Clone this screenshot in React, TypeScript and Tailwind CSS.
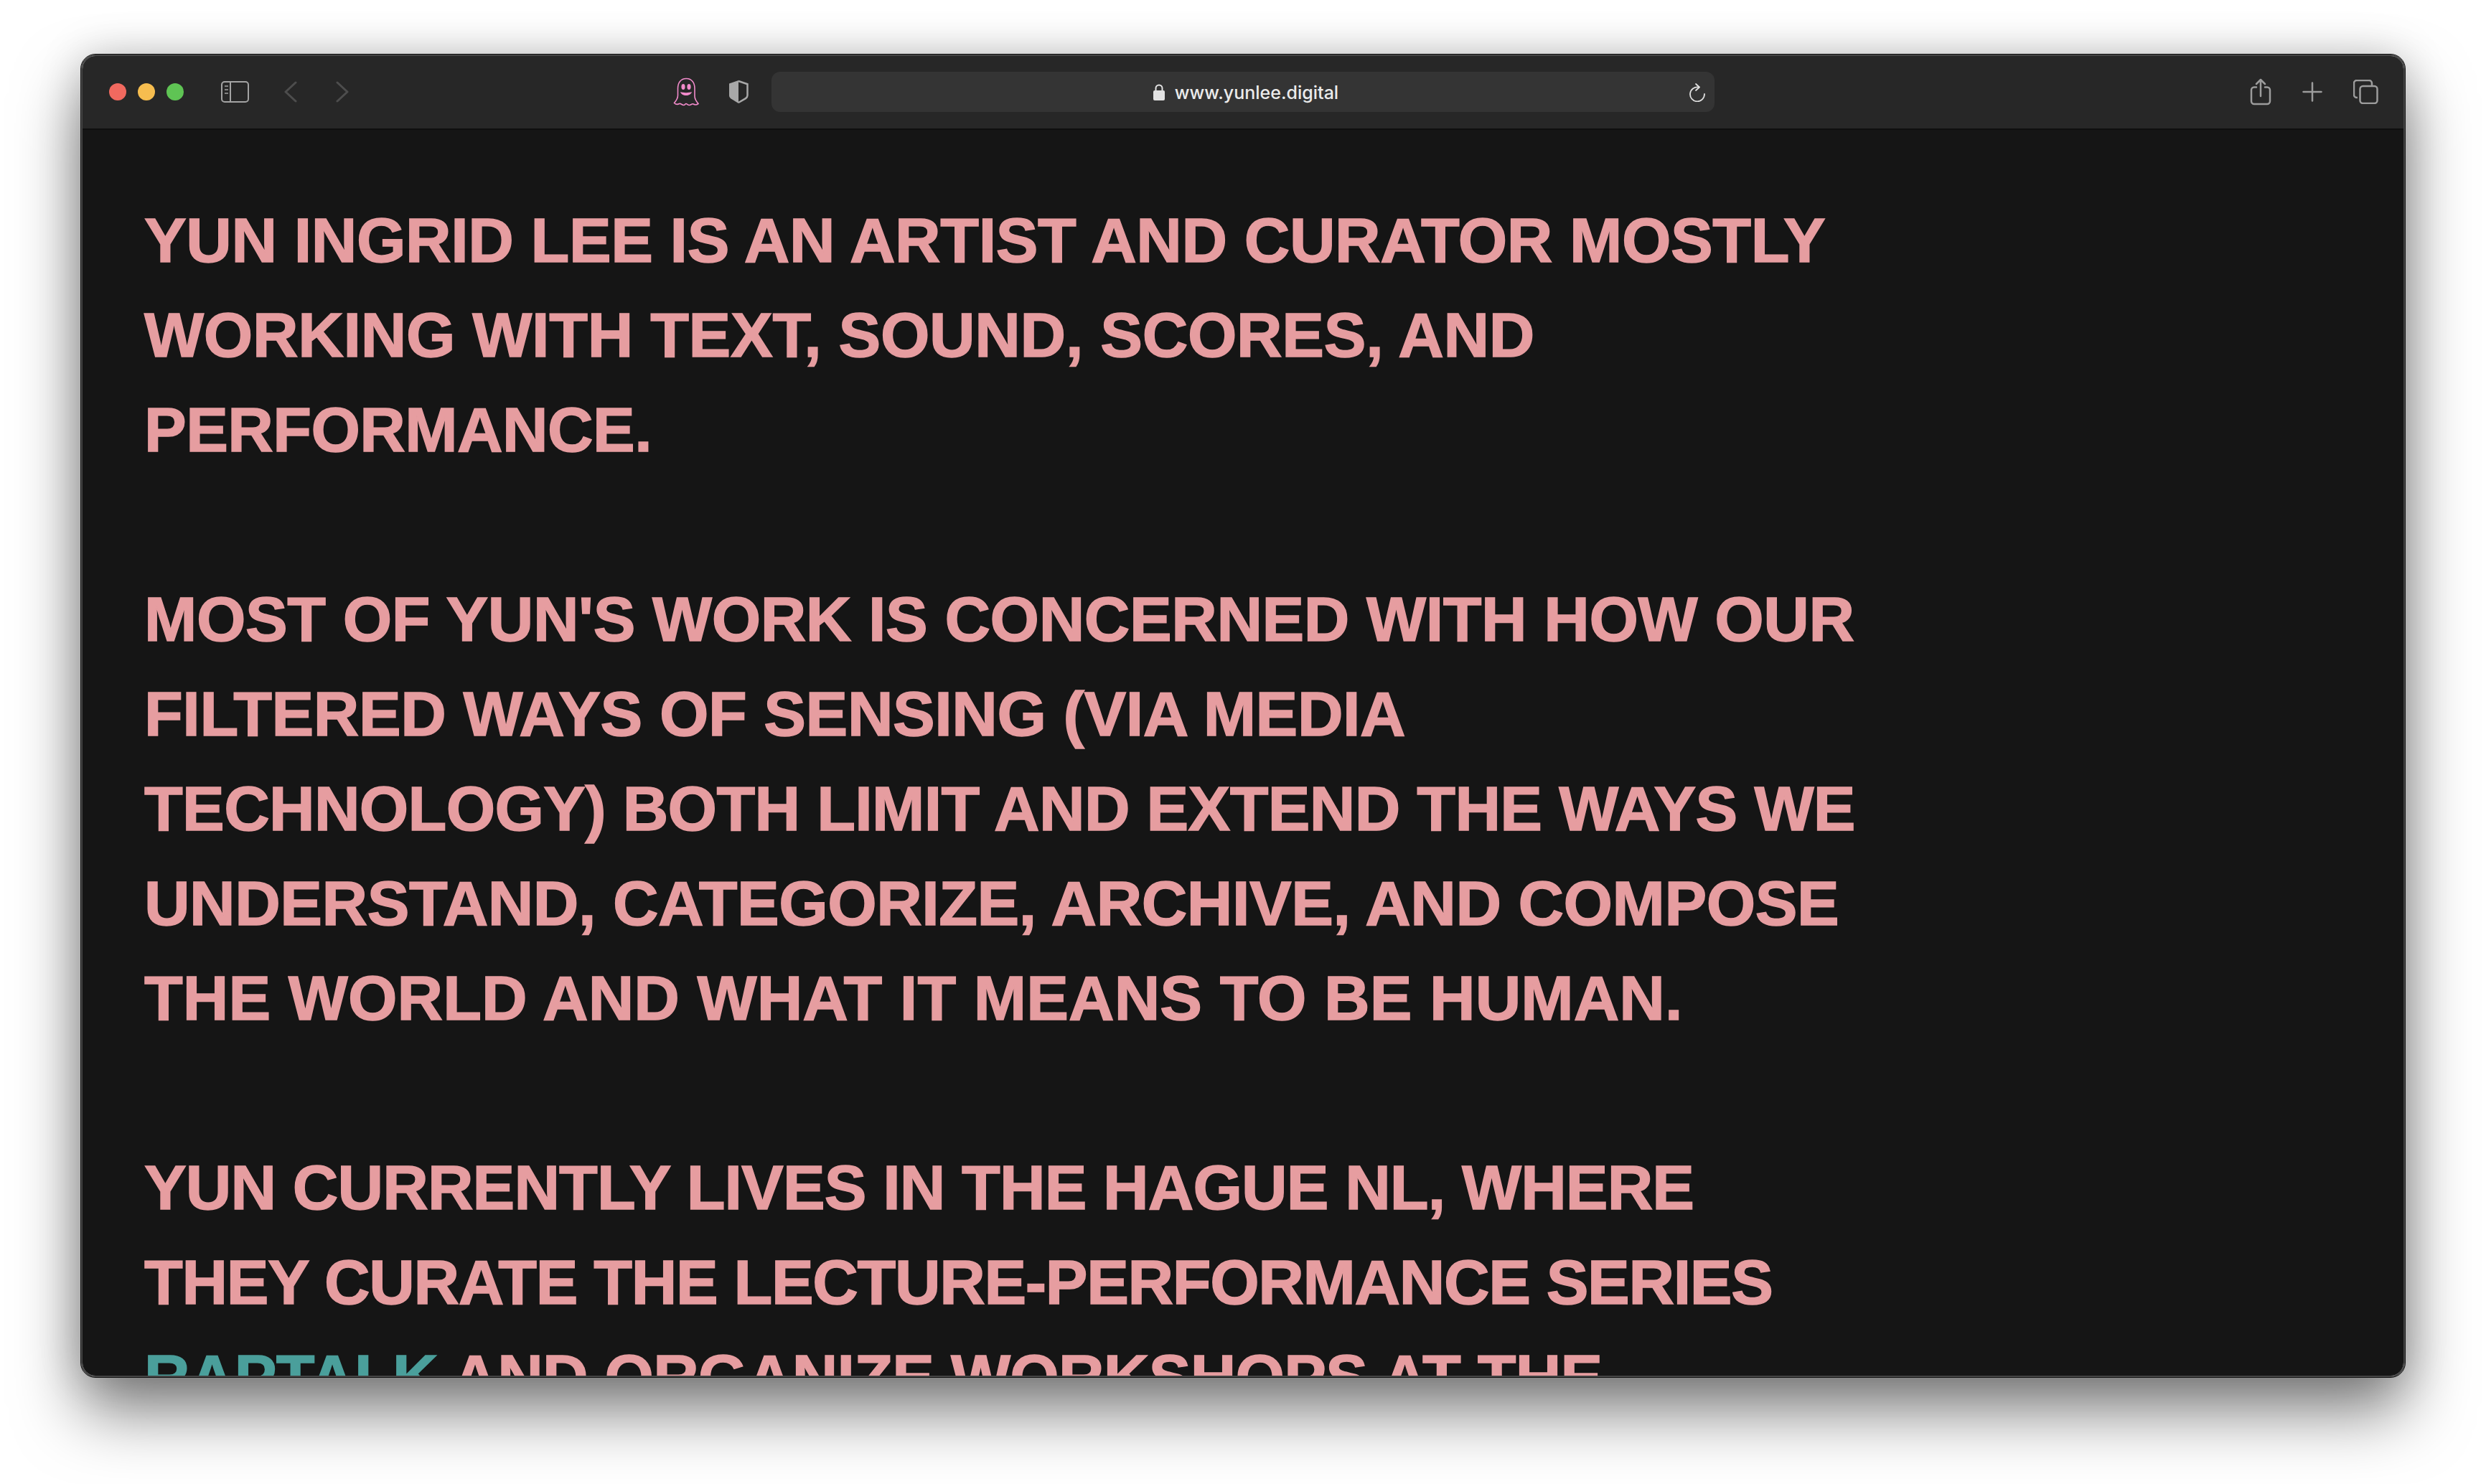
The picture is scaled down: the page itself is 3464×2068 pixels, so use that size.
const paragraphs = [
  [
    { text: 'YUN INGRID LEE IS AN ARTIST AND CURATOR MOSTLY', fit: 'tracking-[-0.38px]' },
    { text: 'WORKING WITH TEXT, SOUND, SCORES, AND', fit: 'tracking-[-0.28px]' },
    { text: 'PERFORMANCE.', fit: 'tracking-[-0.56px]' },
  ],
  [
    { text: "MOST OF YUN'S WORK IS CONCERNED WITH HOW OUR", fit: 'tracking-[-0.4px]' },
    { text: 'FILTERED WAYS OF SENSING (VIA MEDIA', fit: 'tracking-[-0.41px]' },
    { text: 'TECHNOLOGY) BOTH LIMIT AND EXTEND THE WAYS WE', fit: 'tracking-[-0.66px]' },
    { text: 'UNDERSTAND, CATEGORIZE, ARCHIVE, AND COMPOSE', fit: 'tracking-[-0.45px]' },
    { text: 'THE WORLD AND WHAT IT MEANS TO BE HUMAN.', fit: 'tracking-[0.1px]' },
  ],
  [
    { text: 'YUN CURRENTLY LIVES IN THE HAGUE NL, WHERE', fit: 'tracking-[-0.86px]' },
    { text: 'THEY CURATE THE LECTURE-PERFORMANCE SERIES', fit: 'tracking-[-1.32px]' },
  ],
]

function SidebarIcon() {
  return (
    <svg width="39" height="30" viewBox="0 0 39 30" fill="none" stroke="#a3a3a3">
      <rect x="1" y="1" width="37" height="28" rx="4" strokeWidth="2" />
      <path d="M13 1v28" strokeWidth="2" />
      <path d="M5 7h5M5 12h5M5 17h5" strokeWidth="1.6" />
    </svg>
  )
}

function Chevron({ right }: { right?: boolean }) {
  return (
    <svg width="18" height="30" viewBox="0 0 18 30" fill="none" stroke="#4d4d4d" strokeWidth="3" strokeLinecap="round" strokeLinejoin="round">
      <path d={right ? 'M2 2l14 13L2 28' : 'M16 2L2 15l14 13'} />
    </svg>
  )
}

function Ghost() {
  return (
    <svg width="36" height="40" viewBox="0 0 36 40" fill="none">
      <path
        d="M18 1.500C10.500 1.500 6.500 7.500 6.500 15v10c0 4-2 7-5 10.500 2 2 4.500 2.500 7 1 2-1 3.500 2 6 2s2-2 3.500-2 2 2 4.500 2 3.500-2.500 5.500-1.500c2.500 1.500 5 1 7-.5-3-3.500-5-6.500-5-10.500V15c0-7.500-4-13.500-11.500-13.500z"
        stroke="#f28bcb"
        strokeWidth="1.600"
      />
      <ellipse cx="14" cy="13" rx="2.600" ry="4" fill="#f28bcb" />
      <ellipse cx="22" cy="13" rx="2.600" ry="4" fill="#f28bcb" />
      <path d="M10 20c3 1.500 13 1.500 16 0-1 3.500-4 5-8 5s-7-1.500-8-5z" fill="#f28bcb" />
    </svg>
  )
}

function Shield() {
  return (
    <svg width="28" height="34" viewBox="0 0 28 34" fill="none">
      <path d="M14 1L1 5.500V22c0 2 1 3 2.500 4.500L14 33V1z" fill="#a8a8a8" />
      <path d="M14 2l12.500 4.200V22c0 2-1 3-2.500 4.200L14 32" stroke="#a8a8a8" strokeWidth="2.500" />
    </svg>
  )
}

function LockIcon() {
  return (
    <svg width="16" height="23" viewBox="0 0 16 23" fill="none">
      <path d="M3.500 10V6a4.500 4.500 0 0 1 9 0v4" stroke="#e3e3e3" strokeWidth="2" />
      <rect y="9" width="16" height="14" rx="2" fill="#e3e3e3" />
    </svg>
  )
}

function Reload() {
  return (
    <svg width="24" height="26" viewBox="0 0 24 26" fill="none" stroke="#e0e0e0" strokeWidth="1.800" strokeLinecap="round" strokeLinejoin="round">
      <path d="M14 5.500A10 10 0 1 0 22 15" />
      <path d="M10 1l5 4.500-5 4.500" />
    </svg>
  )
}

function Share() {
  return (
    <svg width="30" height="38" viewBox="0 0 30 38" fill="none" stroke="#9c9c9c" strokeWidth="2.500" strokeLinecap="round" strokeLinejoin="round">
      <path d="M9 12.500H6a4 4 0 0 0-4 4V32a4 4 0 0 0 4 4h18a4 4 0 0 0 4-4V16.500a4 4 0 0 0-4-4h-3" />
      <path d="M15 25V2M9 8l6-6 6 6" />
    </svg>
  )
}

function PlusIcon() {
  return (
    <svg width="28" height="28" viewBox="0 0 28 28" fill="none" stroke="#9c9c9c" strokeWidth="2.500" strokeLinecap="round">
      <path d="M14 1.500v25M1.500 14h25" />
    </svg>
  )
}

function Tabs() {
  return (
    <svg width="35" height="34" viewBox="0 0 35 34" fill="none" stroke="#9c9c9c" strokeWidth="2.500">
      <path d="M6 25H5a4 4 0 0 1-4-4V5a4 4 0 0 1 4-4h17a4 4 0 0 1 4 4v3" />
      <rect x="9.500" y="9" width="24" height="24" rx="4" />
    </svg>
  )
}

export default function App() {
  return (
    <div className="h-[2068px] w-[3464px] bg-white pt-[76px] pl-[113px] overflow-hidden">
      <div className="w-[3238px] h-[1843px] flex flex-col rounded-[20px] overflow-hidden border-2 border-[#454545] outline outline-[#111111] shadow-[0_48px_90px_rgba(0,0,0,0.5),0_0_60px_rgba(0,0,0,0.18)]">
        <header className="h-[103px] shrink-0 flex items-center pb-px bg-[#272727] border-b-2 border-[#0f0f0f]">
          <div className="flex items-center gap-4 ml-[37px]">
            <span className="w-6 h-6 rounded-full bg-[#f1695f]" />
            <span className="w-6 h-6 rounded-full bg-[#f6bd4f]" />
            <span className="w-6 h-6 rounded-full bg-[#5fc454]" />
          </div>
          <div className="ml-[52px]"><SidebarIcon /></div>
          <div className="ml-[49px]"><Chevron /></div>
          <div className="ml-[54px]"><Chevron right /></div>
          <div className="ml-[452px]"><Ghost /></div>
          <div className="ml-[41px]"><Shield /></div>
          <div className="ml-[32px] w-[1314px] h-14 rounded-xl bg-[#343434] relative flex items-center justify-center pl-[8px]">
            <LockIcon />
            <span className="ml-[14px] mt-[3px] text-[25px] font-medium text-[#ebebeb] font-['Inter',sans-serif]">www.yunlee.digital</span>
            <div className="absolute right-[12px] top-[16px]"><Reload /></div>
          </div>
          <div className="ml-auto flex items-center gap-[43px] mr-[35px]">
            <Share />
            <PlusIcon />
            <Tabs />
          </div>
        </header>
        <main className="flex-1 bg-[#151515] overflow-hidden pl-[86px] pt-[88px] text-[88px] leading-[132px] font-bold text-[#e69da0] [-webkit-text-stroke:1.500px_#e69da0] font-['Liberation_Sans',sans-serif]">
          {paragraphs.map((lines, i) => (
            <p key={lines[0].text} className="mb-[132px]">
              {lines.map((line) => (
                <span key={line.text} className={`block whitespace-nowrap ${line.fit}`}>{line.text}</span>
              ))}
              {i === 2 && (
                <span className="block whitespace-nowrap tracking-[-0.72px]">
                  <a className="text-[#4a9f9b] [-webkit-text-stroke:1.500px_#4a9f9b]">RAPTALK</a> AND ORGANIZE WORKSHOPS AT THE
                </span>
              )}
            </p>
          ))}
        </main>
      </div>
    </div>
  )
}
